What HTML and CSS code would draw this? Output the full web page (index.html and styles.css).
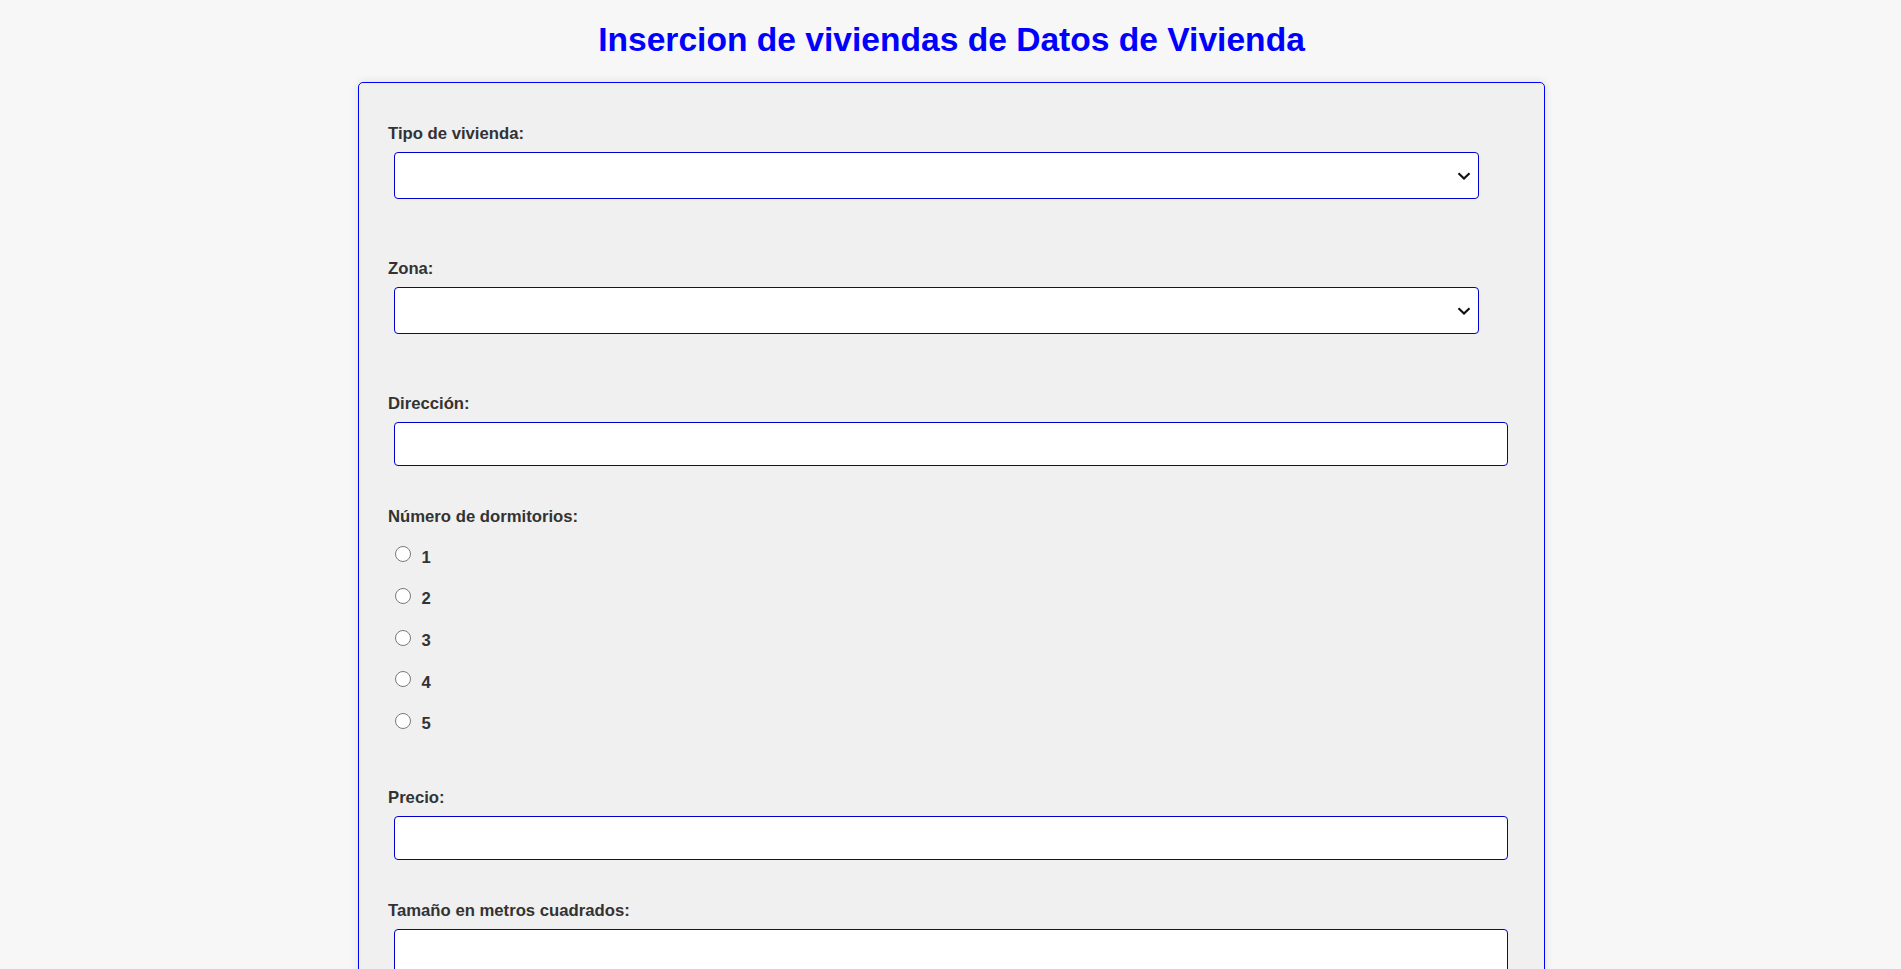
FILE: index.html
```html
<!DOCTYPE html>
<html lang="es">
<head>
<meta charset="utf-8">
<title>Insercion de viviendas</title>
<link rel="stylesheet" href="styles.css">
</head>
<body>
<h1 class="title">Insercion de viviendas de Datos de Vivienda</h1>
<form class="card">
  <div class="field field-select">
    <label class="label" for="tipo">Tipo de vivienda:</label>
    <div class="select-wrap">
      <select id="tipo" class="control select"><option></option></select>
      <svg class="chevron" width="14" height="8" viewBox="0 0 14 8"><path d="M1.5 1.3 L7 6.5 L12.5 1.3" fill="none" stroke="#111" stroke-width="2.2"/></svg>
    </div>
  </div>
  <div class="field field-select">
    <label class="label" for="zona">Zona:</label>
    <div class="select-wrap">
      <select id="zona" class="control select"><option></option></select>
      <svg class="chevron" width="14" height="8" viewBox="0 0 14 8"><path d="M1.5 1.3 L7 6.5 L12.5 1.3" fill="none" stroke="#111" stroke-width="2.2"/></svg>
    </div>
  </div>
  <div class="field">
    <label class="label" for="direccion">Dirección:</label>
    <input id="direccion" class="control text" type="text">
  </div>
  <div class="field field-radio">
    <span class="label label-radio">Número de dormitorios:</span>
    <label class="radio-row"><input class="radio" type="radio" name="dorm" value="1"><span class="radio-text">1</span></label>
    <label class="radio-row"><input class="radio" type="radio" name="dorm" value="2"><span class="radio-text">2</span></label>
    <label class="radio-row"><input class="radio" type="radio" name="dorm" value="3"><span class="radio-text">3</span></label>
    <label class="radio-row"><input class="radio" type="radio" name="dorm" value="4"><span class="radio-text">4</span></label>
    <label class="radio-row"><input class="radio" type="radio" name="dorm" value="5"><span class="radio-text">5</span></label>
  </div>
  <div class="field">
    <label class="label" for="precio">Precio:</label>
    <input id="precio" class="control text" type="text">
  </div>
  <div class="field">
    <label class="label" for="tamano">Tamaño en metros cuadrados:</label>
    <input id="tamano" class="control text" type="text">
  </div>
</form>
</body>
</html>
```

FILE: styles.css
```css
html, body {
  margin: 0;
  padding: 0;
}
body {
  background: #f7f7f7;
  font-family: "Liberation Sans", Arial, sans-serif;
  padding: 20.4px 0 0 2px;
}
.title {
  margin: 0 0 21.6px;
  text-align: center;
  color: #0000ff;
  font-size: 33.6px;
  line-height: 40px;
  font-weight: bold;
}
.card {
  box-sizing: border-box;
  width: 1187px;
  margin: 0 auto;
  background: #f0f0f0;
  border: 1px solid #0000ff;
  border-radius: 5px;
  box-shadow: 0 0 10px rgba(0, 0, 0, 0.1);
  padding: 41.2px 30px 40px 29px;
}
.field {
  margin-bottom: 41.1px;
}
.field-select {
  margin-bottom: 60.2px;
}
.field-radio {
  margin-bottom: 33.4px;
}
.label {
  display: block;
  font-size: 16.7px;
  line-height: 20px;
  font-weight: bold;
  color: #333;
  margin-bottom: 7.8px;
}
.label-radio {
  margin-bottom: 18.9px;
}
.control {
  display: block;
  box-sizing: border-box;
  margin: 0 0 0 6px;
  background: #fff;
  border: 1px solid #0000cc;
  border-radius: 4px;
  font-family: "Liberation Sans", Arial, sans-serif;
  font-size: 16px;
  outline: none;
}
.select-wrap {
  position: relative;
  width: 1090.5px;
}
.select {
  width: 1084.5px;
  height: 47px;
  -webkit-appearance: none;
  appearance: none;
  padding: 0 10px;
}
.chevron {
  position: absolute;
  right: 7.5px;
  top: 19.6px;
  pointer-events: none;
}
.text {
  width: 1114px;
  height: 44.4px;
  padding: 0 12px;
}
.radio-row {
  display: flex;
  align-items: flex-start;
  height: 41.7px;
}
.radio {
  -webkit-appearance: none;
  appearance: none;
  box-sizing: border-box;
  width: 16px;
  height: 16px;
  margin: 0 0 0 7px;
  border: 1.5px solid #7a7a7a;
  border-radius: 50%;
  background: #fff;
}
.radio-text {
  margin: 1.2px 0 0 10.5px;
  font-size: 16.7px;
  line-height: 20px;
  font-weight: bold;
  color: #333;
}
```
